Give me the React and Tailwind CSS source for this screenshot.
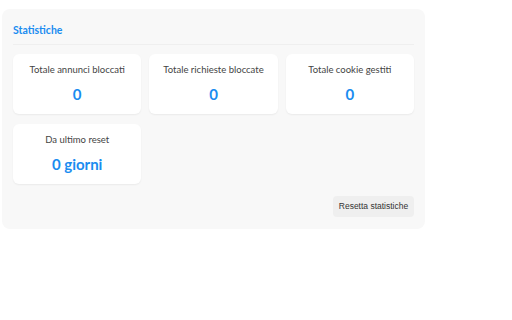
export default function App() {
  const stats = [
    { label: 'Totale annunci bloccati', value: '0' },
    { label: 'Totale richieste bloccate', value: '0' },
    { label: 'Totale cookie gestiti', value: '0' },
    { label: 'Da ultimo reset', value: '0 giorni' },
  ]

  return (
    <div className="w-[512px] h-[320px] bg-white pt-[9px] pl-[2px]" style={{ fontFamily: 'Lato, "Open Sans", sans-serif' }}>
      <div className="w-[423px] rounded-lg bg-[#f8f8f8] px-[11px] pt-[13px] pb-[12px]">
        <h2 className="text-[10.5px] font-bold text-[#1a8cf0] leading-[16px]">Statistiche</h2>
        <div className="mt-[6px] h-px bg-[#efefef]" />

        <div className="mt-[9px] grid grid-cols-3 gap-x-2 gap-y-[10px]">
          {stats.map((s) => (
            <div key={s.label} className="h-[60px] rounded-md bg-white shadow-[0_1px_2px_rgba(0,0,0,0.06)] flex flex-col items-center pt-[10px]">
              <p className="text-[9.5px] text-[#444] leading-[12px]">{s.label}</p>
              <p className="mt-[9px] text-[15px] font-bold text-[#1a8cf0] leading-[18px]">{s.value}</p>
            </div>
          ))}
        </div>

        <div className="mt-[12px] flex justify-end">
          <button className="h-[21px] w-[81px] rounded bg-[#efefef] text-[8.5px] text-[#333]" style={{ fontFamily: '"Liberation Sans", Arial, sans-serif' }}>
            Resetta statistiche
          </button>
        </div>
      </div>
    </div>
  )
}
